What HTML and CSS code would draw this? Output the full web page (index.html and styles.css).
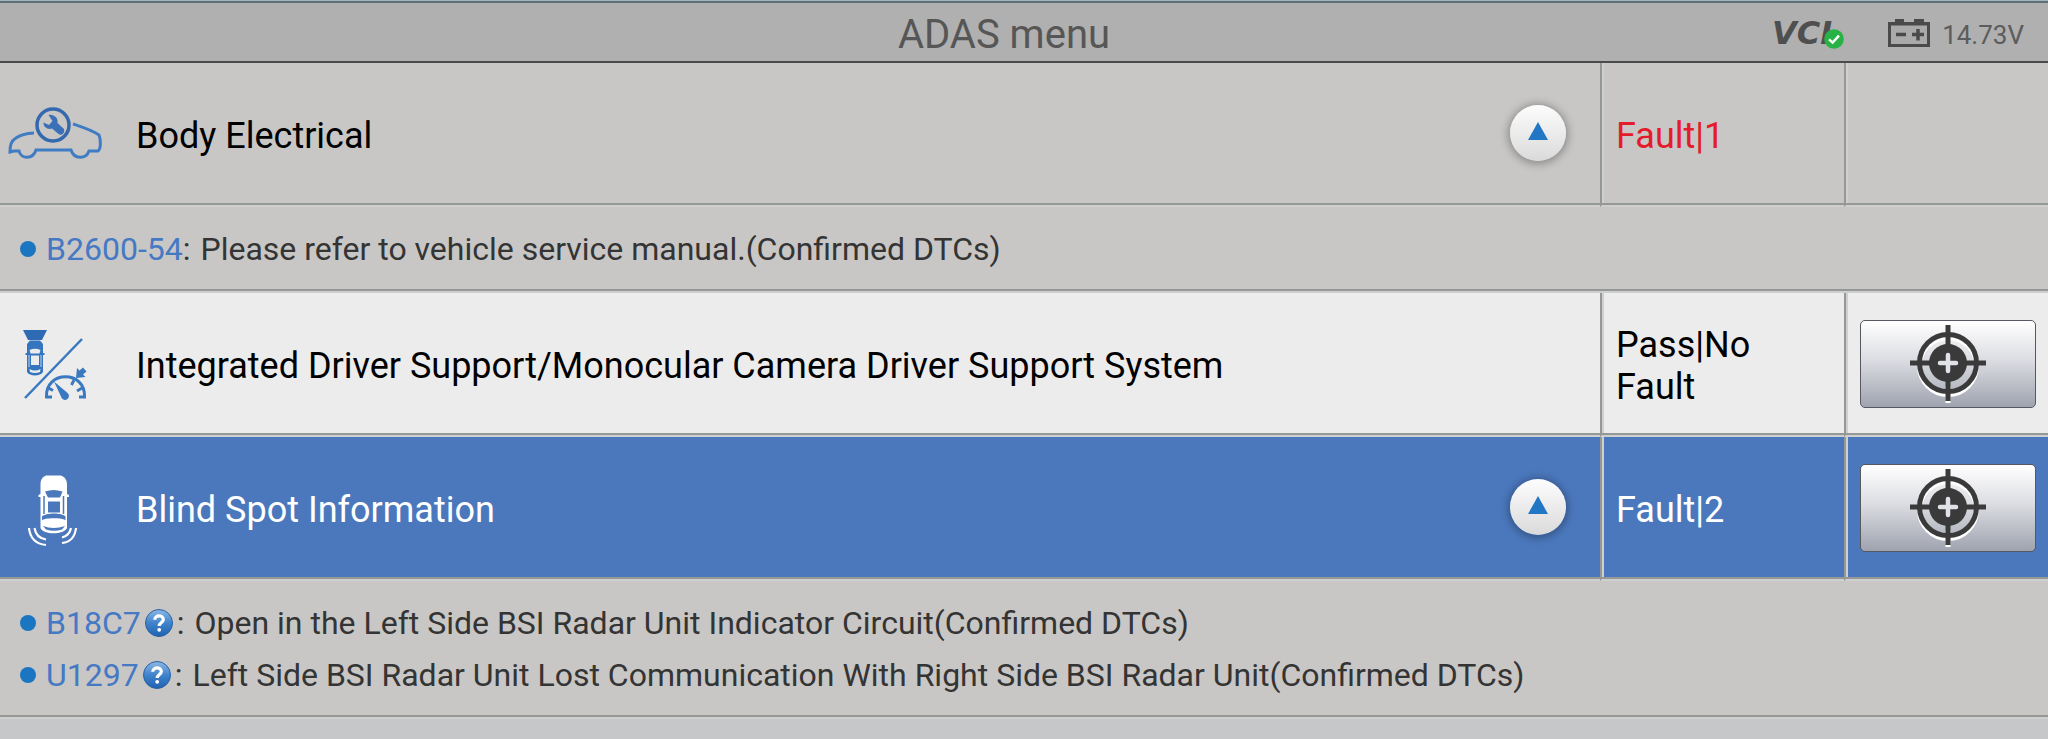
FILE: index.html
```
<!DOCTYPE html>
<html lang="en">
<head>
<meta charset="utf-8">
<title>ADAS menu</title>
<link rel="stylesheet" href="styles.css">
</head>
<body>
<svg class="defs" aria-hidden="true">
  <defs>
    <symbol id="target" viewBox="0 0 80 80">
      <g fill="none" stroke-width="5">
        <g stroke="#fff" transform="translate(0 3)"><circle cx="40" cy="40" r="28.5"/><path d="M40 60V77"/></g>
        <g stroke="#3a3a3b"><circle cx="40" cy="40" r="28.5"/><path d="M40 2V78M2 40H78"/></g>
      </g>
      <circle cx="40" cy="40" r="19" fill="#3a3a3b"/>
      <path d="M40 32V48M32 40H48" stroke="#e0e2e7" stroke-width="4.5" stroke-linecap="round"/>
    </symbol>
    <linearGradient id="ball" x1="0" y1="0" x2="0" y2="1">
      <stop offset="0" stop-color="#8db9e6"/><stop offset=".5" stop-color="#3f83cb"/><stop offset="1" stop-color="#1f62b0"/>
    </linearGradient>
    <symbol id="help" viewBox="0 0 28 28">
      <circle cx="14" cy="14" r="13.5" fill="url(#ball)" stroke="#2b62a3"/>
      <path d="M9.8 10.8C9.8 5.6 18.3 5.7 18.3 10.4C18.3 13.4 14.2 13.5 14.2 17" fill="none" stroke="#fff" stroke-width="3.2"/>
      <circle cx="14.2" cy="20.8" r="1.9" fill="#fff"/>
    </symbol>
  </defs>
</svg>

<header class="bar">
  <h1 class="bar-title">ADAS menu</h1>
  <div class="status">
    <div class="vci">VCI
      <svg class="vci-ok" viewBox="0 0 20 20" role="img" aria-label="connected"><circle cx="10" cy="10" r="9.8" fill="#27b245"/><path d="M5 10.3L8.6 13.6L15 6.6" fill="none" stroke="#fff" stroke-width="2.4"/></svg>
    </div>
    <svg class="battery" viewBox="0 0 42 28" aria-hidden="true">
      <path d="M7 0H16V3H26V0H36V3H42V28H0V3H7Z" fill="#4a4a4a"/>
      <path d="M3 6.5H39V25H3Z" fill="#aaa"/>
      <path d="M8 15.500H18M24 15.500H36M30 10V21.500" stroke="#4a4a4a" stroke-width="3.500"/>
    </svg>
    <span class="volts">14.73V</span>
  </div>
</header>

<main>
<table class="systems">
  <colgroup><col><col class="col-status"><col class="col-action"></colgroup>
  <tbody>
  <tr class="system">
    <td>
      <div class="name">
        <svg class="icon" viewBox="0 0 112 92" aria-hidden="true">
          <g transform="translate(0 13)">
            <g fill="none" stroke="#3f7cc4" stroke-width="3">
              <path d="M34 32C25 32.500 20 34 16 37C11 40 10 44 10 51L14 50H19C21 58.500 33 58.500 36 49H71C74 58.500 86 58.500 89 50H98C101 48 101 39 99 34C92 29 82 26 73 23"/>
              <circle cx="53" cy="24" r="16" stroke="#3569ae" stroke-width="3.500"/>
            </g>
            <path d="M48.500 14C54 13 58.500 17 57.500 22L64 28C65 32 62 35 58.500 33L52 27.500C48 29 43 26 43.500 21.500L49 24L52.500 20Z" fill="#3a70b8"/>
          </g>
        </svg>
        <span class="label">Body Electrical</span>
        <button class="toggle" aria-label="Collapse Body Electrical"><svg viewBox="0 0 20 18"><path d="M10 0L20 18H0Z" fill="#2277c4"/></svg></button>
      </div>
    </td>
    <td class="result fault">Fault|1</td>
    <td></td>
  </tr>
  <tr class="codes">
    <td colspan="3">
      <ul>
        <li><a href="#b2600">B2600-54</a><span class="colon">:</span><span>Please refer to vehicle service manual.(Confirmed DTCs)</span></li>
      </ul>
    </td>
  </tr>
  <tr class="system pass">
    <td>
      <div class="name">
        <svg class="icon" viewBox="0 0 112 92" aria-hidden="true">
          <path d="M23 12H47L42 22H28Z" fill="#2f6bb5"/>
          <path d="M30 22.500H40L43 26V35H44.500V37H43V54C41 58.500 29 58.500 27 54V37H25.500V35H27V26Z" fill="#3574bf"/>
          <path d="M29.500 32Q35 29.500 40.500 32L39.500 35.500H30.500ZM31 37.500H39V47H31ZM29.500 51Q35 54 40.500 51L40 54Q35 56 30 54Z" fill="#ececec"/>
          <path d="M29 37V49M41 37V49" stroke="#ececec" stroke-width=".8"/>
          <g fill="none" stroke="#3a78c0" stroke-width="3">
            <path d="M25 80L82 21" stroke-width="2.500"/>
            <path d="M52 79H46.500C45 52 86 52 84.500 79H79"/>
            <path d="M48.500 70L53 72.500M74 62L71.500 67M82 70L77 73" stroke-width="2.800"/>
          </g>
          <path d="M54 63.500L67 74.500A4 4 0 1 1 61 78.500Z" fill="#3a78c0"/>
          <path d="M76 60L77 50L79.500 52.500L83 49.500L86.500 53.500L83 56.500L85.500 59Z" fill="#3a78c0"/>
        </svg>
        <span class="label">Integrated Driver Support/Monocular Camera Driver Support System</span>
      </div>
    </td>
    <td class="result">Pass|No Fault</td>
    <td class="action"><button class="calibrate" aria-label="Calibrate driver support"><svg><use href="#target"/></svg></button></td>
  </tr>
  <tr class="system selected">
    <td>
      <div class="name">
        <svg class="icon" viewBox="0 0 112 92" aria-hidden="true">
          <path d="M46 13.500H61C65 15 67 18 67 23V32L69 33V35H67V66C64 73 43 73 40.500 66V35H38.500V33L40.500 32V23C40.500 18 42 15 46 13.500Z" fill="#fff"/>
          <path d="M45 29.500Q53.500 26.500 62.500 29.500L60 35.500H48ZM48 39.500H60V50.500H48ZM42 54.500C46 50.500 62 50.500 65.500 54.500V58.500C64.500 55.500 43 55.500 42 58.500ZM43 64Q53.500 68 65 64L62 67.500Q54 70 46 67.500Z" fill="#4b78bd"/>
          <path d="M44 34V52M63.500 34V52" stroke="#4b78bd" stroke-width="1.500"/>
          <path d="M29 66C30 76 36 82 46 83M34.500 66C35.500 72 39 76.500 46 77.500M76 66C75 75 71 80 62 81M71 66C70 71 67.500 74 62 75.500" fill="none" stroke="#fff" stroke-width="2.200"/>
        </svg>
        <span class="label">Blind Spot Information</span>
        <button class="toggle" aria-label="Collapse Blind Spot Information"><svg viewBox="0 0 20 18"><path d="M10 0L20 18H0Z" fill="#2277c4"/></svg></button>
      </div>
    </td>
    <td class="result">Fault|2</td>
    <td class="action"><button class="calibrate" aria-label="Calibrate blind spot"><svg><use href="#target"/></svg></button></td>
  </tr>
  <tr class="codes">
    <td colspan="3">
      <ul>
        <li><a href="#b18c7">B18C7</a><button class="help" aria-label="Help for B18C7"><svg><use href="#help"/></svg></button><span class="colon">:</span><span>Open in the Left Side BSI Radar Unit Indicator Circuit(Confirmed DTCs)</span></li>
        <li><a href="#u1297">U1297</a><button class="help" aria-label="Help for U1297"><svg><use href="#help"/></svg></button><span class="colon">:</span><span>Left Side BSI Radar Unit Lost Communication With Right Side BSI Radar Unit(Confirmed DTCs)</span></li>
      </ul>
    </td>
  </tr>
  </tbody>
</table>
</main>
</body>
</html>
```
FILE: styles.css
```
* { box-sizing: border-box; }
body { margin: 0; background: #c6c7c9; font-family: Roboto, "Liberation Sans", sans-serif; color: #000; }
button { border: 0; padding: 0; background: none; font: inherit; cursor: pointer; }
svg { display: block; }
.defs { position: absolute; width: 0; height: 0; }

.bar {
  display: grid; grid-template-columns: 1fr auto 1fr; align-items: center;
  height: 63px; padding: 0 24px;
  background: #b0b0b0; border-bottom: 2px solid #4b4b4b;
  box-shadow: inset 0 1px #a3b4bc, inset 0 3px #5f6f78;
}
.bar-title { grid-column: 2; margin: 0; padding: 8px 40px 0 0; font-size: 40px; line-height: 48px; font-weight: 400; color: #565656; }
.status { display: flex; align-items: center; justify-content: flex-end; gap: 12px; padding-top: 4px; }
.vci { position: relative; margin-right: 44px; font: italic 700 32px/32px "DejaVu Sans", sans-serif; color: #4f4f4f; }
.vci-ok { position: absolute; right: -12px; bottom: 0; width: 20px; height: 20px; }
.battery { width: 42px; height: 28px; }
.volts { font-size: 26px; line-height: 32px; color: #5c5c5c; padding-top: 4px; }

.systems { width: 100%; table-layout: fixed; border-collapse: separate; border-spacing: 0; }
.col-status { width: 244px; }
.col-action { width: 204px; }
td { padding: 0; border-bottom: 2px solid #cdd0cf; box-shadow: inset 0 -2px #969896; background: #c8c7c5; }
.system td { height: 144px; }
.system td + td { border-left: 2px solid #969896; box-shadow: inset 0 -2px #969896, inset 2px 0 #cdd0cf; }
.system td.result { padding: 4px 12px 0 14px; font-size: 36px; line-height: 42px; }
td.fault { color: #e31b2b; }
.system td.action { padding: 0 12px 0 14px; }

.name { display: flex; align-items: center; height: 140px; padding-right: 34px; }
.icon { flex: none; width: 112px; height: 92px; margin-right: 24px; }
.label { flex: 1; font-size: 36px; line-height: 42px; padding-top: 4px; }
.toggle {
  display: grid; place-items: center; width: 56px; height: 56px; margin-bottom: 2px; border-radius: 50%;
  background: linear-gradient(#fdfdfd, #dadada); box-shadow: 0 1px 8px 2px rgba(0, 0, 0, .3);
}
.toggle svg { width: 20px; height: 18px; margin-bottom: 4px; }

.pass td { background: #ececec; }
.selected td { background: #4b78bd; }
.selected { color: #fff; }
.calibrate {
  display: grid; place-items: center; width: 100%; height: 88px; border: 1px solid #55585e; border-radius: 5px;
  background: linear-gradient(#fff, #dcdde2 45%, #9fa3af);
}
.calibrate svg { width: 80px; height: 80px; margin-bottom: 2px; }

.codes td { padding: 16px 0; }
ul { list-style: none; margin: 0; padding: 0 20px; }
li { display: flex; align-items: center; height: 52px; font-size: 32px; line-height: 38px; color: #343434; }
li::before { content: ""; width: 16px; height: 16px; border-radius: 50%; background: #1b76c2; margin-right: 10px; }
a { color: #4679c4; text-decoration: none; }
.help { margin: 0 4px; }
.help svg { width: 28px; height: 28px; }
.colon { margin-right: 10px; }
```
